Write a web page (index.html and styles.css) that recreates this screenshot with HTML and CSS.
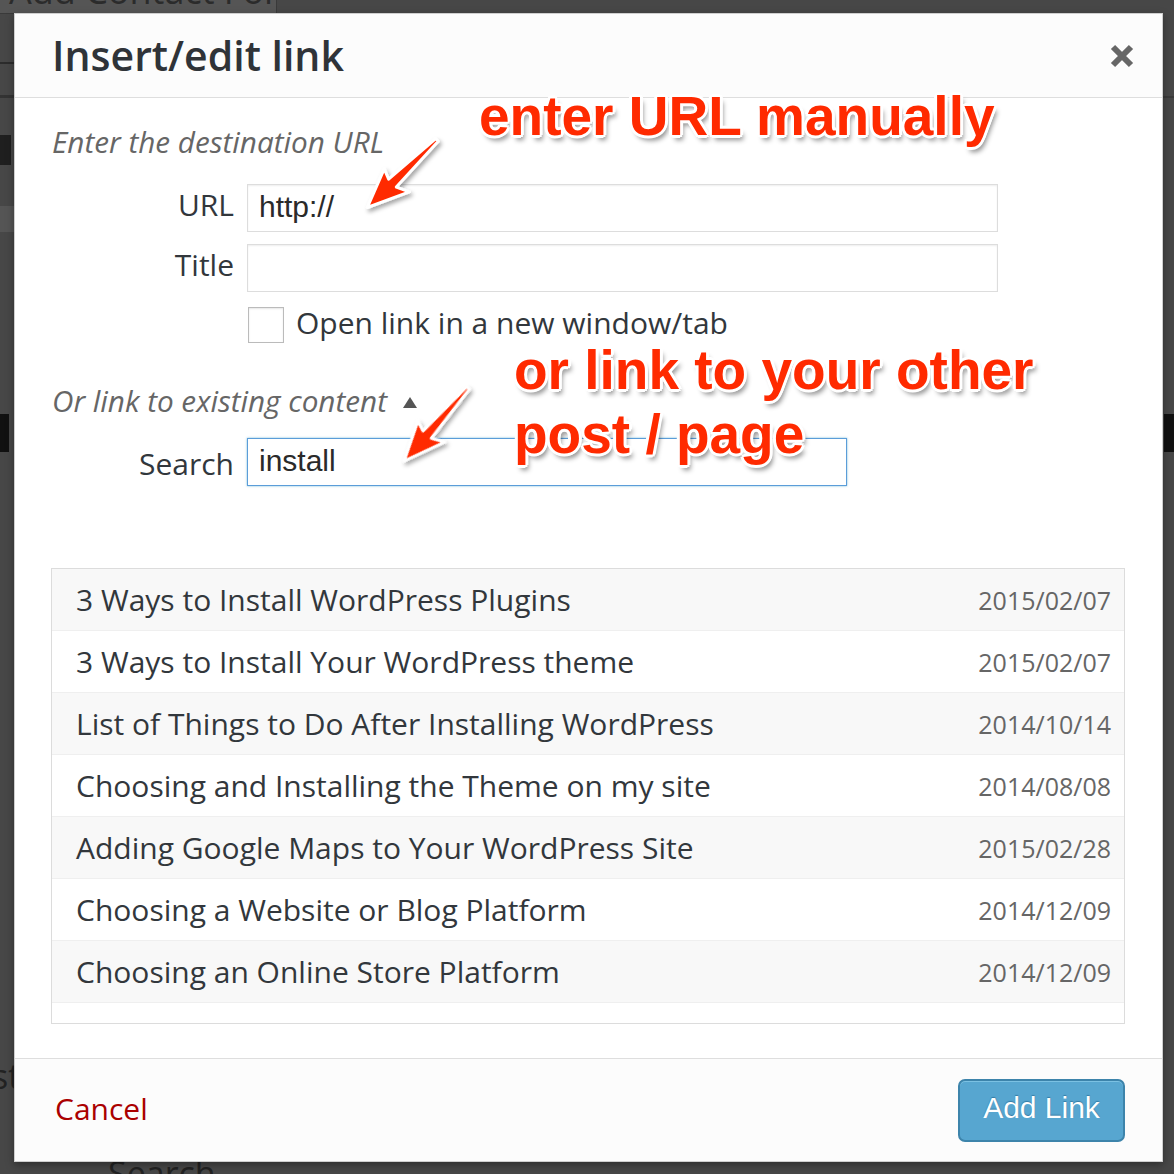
FILE: index.html
```html
<!DOCTYPE html>
<html lang="en">
<head>
<meta charset="utf-8">
<title>Insert/edit link</title>
<link rel="stylesheet" href="styles.css">
</head>
<body>
<div class="screen">
  <div class="backdrop">
    <div class="bg-button">Add Contact Form</div>
    <div class="bg-line bg-line-1"></div>
    <div class="bg-line bg-line-2"></div>
    <div class="bg-block bg-block-1"></div>
    <div class="bg-band"></div>
    <div class="bg-block bg-block-2"></div>
    <div class="bg-block bg-block-3"></div>
    <div class="bg-line bg-line-3"></div>
    <div class="bg-text bg-st">st</div>
    <div class="bg-text bg-search">Search</div>
  </div>

  <div class="dialog">
    <header class="dlg-head">
      <h1 class="dlg-title">Insert/edit link</h1>
      <button class="dlg-close" aria-label="Close">
        <svg width="26" height="26" viewBox="0 0 26 26"><path d="M4 4 L22 22 M22 4 L4 22" stroke="#666" stroke-width="6" stroke-linecap="butt"/></svg>
      </button>
    </header>

    <div class="dlg-body">
      <p class="howto">Enter the destination URL</p>
      <div class="field">
        <span class="field-label">URL</span>
        <div class="field-input">http://</div>
      </div>
      <div class="field field-title">
        <span class="field-label">Title</span>
        <div class="field-input"></div>
      </div>
      <div class="check-row">
        <span class="check-box"></span>
        <span class="check-text">Open link in a new window/tab</span>
      </div>
      <p class="howto toggle">Or link to existing content <span class="toggle-arrow"></span></p>
      <div class="field field-search">
        <span class="field-label">Search</span>
        <div class="field-input is-focus">install</div>
      </div>

      <ul class="results">
        <li class="result"><span class="result-title">3 Ways to Install WordPress Plugins</span><span class="result-date">2015/02/07</span></li>
        <li class="result"><span class="result-title">3 Ways to Install Your WordPress theme</span><span class="result-date">2015/02/07</span></li>
        <li class="result"><span class="result-title">List of Things to Do After Installing WordPress</span><span class="result-date">2014/10/14</span></li>
        <li class="result"><span class="result-title">Choosing and Installing the Theme on my site</span><span class="result-date">2014/08/08</span></li>
        <li class="result"><span class="result-title">Adding Google Maps to Your WordPress Site</span><span class="result-date">2015/02/28</span></li>
        <li class="result"><span class="result-title">Choosing a Website or Blog Platform</span><span class="result-date">2014/12/09</span></li>
        <li class="result"><span class="result-title">Choosing an Online Store Platform</span><span class="result-date">2014/12/09</span></li>
        <li class="result"><span class="result-title">&nbsp;</span><span class="result-date">&nbsp;</span></li>
      </ul>
    </div>

    <footer class="dlg-foot">
      <a class="cancel" href="#">Cancel</a>
      <button class="btn-primary">Add Link</button>
    </footer>
  </div>

  <div class="note note-url">enter URL manually</div>
  <div class="note note-post">or link to your other<br>post / page</div>

  <svg class="arrows" width="1174" height="1174" viewBox="0 0 1174 1174">
    <defs>
      <filter id="sh" x="-30%" y="-30%" width="160%" height="160%">
        <feDropShadow dx="2" dy="3" stdDeviation="2" flood-color="#000" flood-opacity="0.35"/>
      </filter>
    </defs>
    <g filter="url(#sh)">
      <polygon transform="translate(437 140) rotate(135.9)" points="0,-1.8 62,-5.5 56,-18 97,0 58,16 62,5.5 0,1.8" fill="#ff2a00" stroke="#fff" stroke-width="3" stroke-linejoin="round"/>
      <polygon transform="translate(468 388) rotate(131.2)" points="0,-1.8 62,-5.5 56,-18 97,0 58,16 62,5.5 0,1.8" fill="#ff2a00" stroke="#fff" stroke-width="3" stroke-linejoin="round"/>
    </g>
  </svg>
</div>
</body>
</html>
```

FILE: styles.css
```css
* { box-sizing: border-box; }

html, body {
  margin: 0;
  padding: 0;
}

body {
  background: #474747;
  font-family: "Open Sans", "Noto Sans", sans-serif;
}

.screen {
  position: relative;
  width: 1174px;
  height: 1174px;
  overflow: hidden;
  background: #474747;
}

/* underlying page fragments */
.backdrop {
  position: absolute;
  inset: 0;
}
.bg-button {
  position: absolute;
  left: -2px;
  top: -32px;
  width: 279px;
  height: 46px;
  background: #555;
  border: 1px solid #3a3a3a;
  color: #2b2b2b;
  font-size: 36px;
  line-height: 44px;
  padding-left: 10px;
  white-space: nowrap;
  overflow: hidden;
}
.bg-line {
  position: absolute;
  height: 2px;
  background: #2c2c2c;
}
.bg-line-1 { left: 0; top: 62px; width: 14px; }
.bg-line-2 { left: 0; top: 95px; width: 14px; height: 3px; background: #333; }
.bg-line-3 { right: 0; top: 96px; width: 11px; background: #3a3a3a; }
.bg-block {
  position: absolute;
  background: #1f1f1f;
}
.bg-block-1 { left: 0; top: 135px; width: 11px; height: 30px; }
.bg-block-2 { left: 0; top: 414px; width: 9px; height: 38px; background: #111; }
.bg-block-3 { right: 0; top: 414px; width: 10px; height: 38px; background: #111; }
.bg-band {
  position: absolute;
  left: 0;
  top: 206px;
  width: 14px;
  height: 26px;
  background: #555;
}
.bg-text {
  position: absolute;
  color: #222;
  font-size: 34px;
  line-height: 40px;
}
.bg-st { left: -8px; top: 1056px; }
.bg-search { left: 108px; top: 1153px; }

/* dialog */
.dialog {
  position: absolute;
  left: 14px;
  top: 13px;
  width: 1149px;
  height: 1149px;
  background: #fff;
  border: 1px solid #cfcfcf;
  box-shadow: 0 3px 8px rgba(0, 0, 0, 0.35);
  display: flex;
  flex-direction: column;
}

.dlg-head {
  height: 84px;
  flex: none;
  display: flex;
  align-items: center;
  justify-content: space-between;
  padding: 0 27px 0 37px;
  background: #fcfcfc;
  border-bottom: 1px solid #dedede;
}
.dlg-title {
  margin: 0;
  font-size: 41px;
  font-weight: 600;
  color: #2f3338;
  line-height: 1;
}
.dlg-close {
  border: 0;
  background: none;
  padding: 0;
  width: 26px;
  height: 26px;
  display: flex;
}

.dlg-body {
  flex: 1;
  padding: 0 37px;
}

.howto {
  margin: 24px 0 0;
  font-style: italic;
  font-size: 29.7px;
  line-height: 40px;
  color: #666;
}

.field {
  display: flex;
  align-items: center;
  margin-top: 22px;
}
.field-title { margin-top: 12px; }
.field-search { margin-top: 17px; }

.field-label {
  width: 182px;
  margin-right: 13px;
  text-align: right;
  font-size: 30px;
  line-height: 40px;
  padding-bottom: 6px;
  color: #32373c;
}
.field-search .field-label { padding-bottom: 0; padding-top: 4px; }
.field-input {
  width: 751px;
  height: 48px;
  border: 1px solid #ddd;
  box-shadow: inset 0 1px 2px rgba(0, 0, 0, 0.07);
  padding: 0 11px 3px;
  display: flex;
  align-items: center;
  font-family: "Liberation Sans", Arial, sans-serif;
  font-size: 30px;
  color: #2a2a2a;
}
.field-search .field-input { width: 600px; }
.field-input.is-focus {
  border-color: #5b9dd9;
  box-shadow: 0 0 2px rgba(30, 140, 190, 0.6);
}

.check-row {
  display: flex;
  align-items: center;
  height: 36px;
  margin-top: 15px;
  padding-left: 196px;
}
.check-box {
  width: 36px;
  height: 36px;
  border: 1px solid #bbb;
  box-shadow: inset 0 1px 2px rgba(0, 0, 0, 0.1);
  background: #fff;
}
.check-text {
  margin-left: 12px;
  font-size: 30px;
  line-height: 36px;
  padding-bottom: 4px;
  color: #32373c;
}

.toggle { margin-top: 38px; }
.toggle-arrow {
  display: inline-block;
  width: 0;
  height: 0;
  margin-left: 8px;
  border-left: 7px solid transparent;
  border-right: 7px solid transparent;
  border-bottom: 11px solid #555;
  vertical-align: 4px;
}

.results {
  list-style: none;
  margin: 82px 0 0 -1px;
  padding: 0;
  width: 1074px;
  height: 456px;
  border: 1px solid #dcdcdc;
  overflow: hidden;
}
.result {
  height: 62px;
  display: flex;
  align-items: center;
  justify-content: space-between;
  padding: 0 13px 0 24px;
  border-bottom: 1px solid #efefef;
  background: #fff;
}
.result:nth-child(odd) { background: #f8f8f8; }
.result:last-child { background: #fff; }
.result-title {
  font-size: 30px;
  color: #32373c;
  padding-bottom: 1px;
}
.result-date {
  font-size: 25px;
  color: #666;
}

.dlg-foot {
  height: 103px;
  flex: none;
  display: flex;
  align-items: center;
  justify-content: space-between;
  padding: 0 37px 0 40px;
  background: #fcfcfc;
  border-top: 1px solid #dedede;
}
.cancel {
  font-size: 30px;
  color: #a00;
  text-decoration: none;
  padding-bottom: 4px;
}
.btn-primary {
  width: 167px;
  height: 63px;
  border: 2px solid #3d84ab;
  border-radius: 7px;
  background: #57a6d0;
  color: #fff;
  font-family: "Liberation Sans", Arial, sans-serif;
  font-size: 30px;
  text-shadow: 0 -1px 1px rgba(0, 60, 100, 0.4);
  box-shadow: inset 0 1px 0 rgba(160, 220, 245, 0.5);
  padding: 0 0 4px;
}

/* annotations */
.note {
  position: absolute;
  font-family: "Liberation Sans", Arial, sans-serif;
  font-weight: bold;
  font-size: 55px;
  color: #ff2a00;
  white-space: nowrap;
  text-shadow:
    -2px -2px 0 #fff, 2px -2px 0 #fff, -2px 2px 0 #fff, 2px 2px 0 #fff,
    0 -3px 0 #fff, 0 3px 0 #fff, -3px 0 0 #fff, 3px 0 0 #fff,
    3px 5px 5px rgba(0, 0, 0, 0.45);
}
.note-url {
  left: 479px;
  top: 89px;
  line-height: 55px;
}
.note-post {
  left: 514px;
  top: 338px;
  line-height: 64px;
}

.arrows {
  position: absolute;
  left: 0;
  top: 0;
  pointer-events: none;
}
```
